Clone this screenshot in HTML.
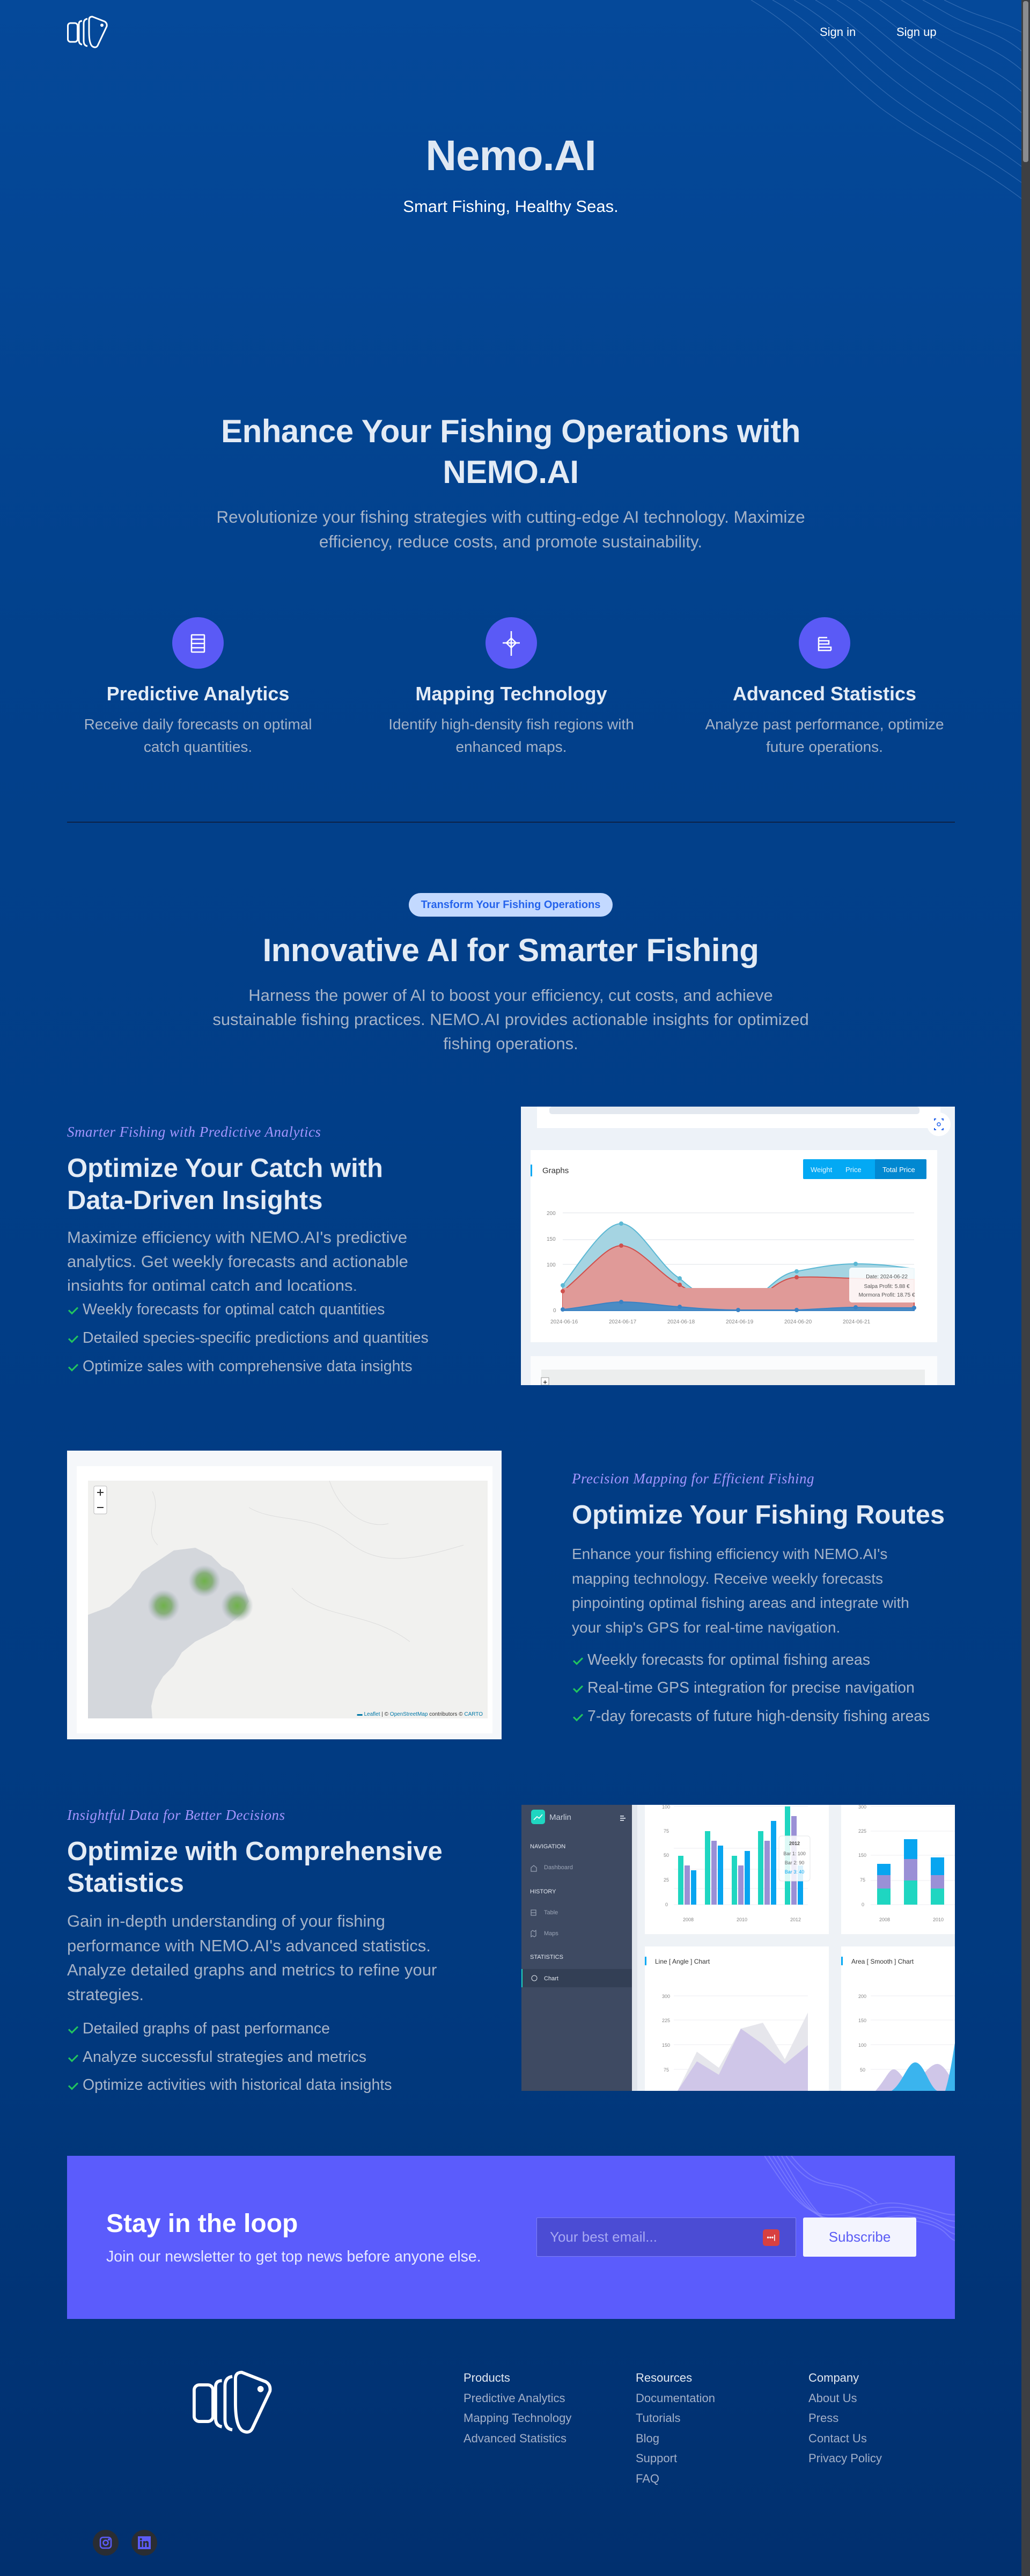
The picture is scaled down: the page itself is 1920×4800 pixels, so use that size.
<!DOCTYPE html>
<html><head><meta charset="utf-8">
<style>
*{margin:0;padding:0;box-sizing:border-box}
html,body{width:1920px;height:4800px;overflow:hidden}
body{position:relative;font-family:"Liberation Sans",Arial,sans-serif;background:linear-gradient(180deg,#05499a 0%,#02418c 25%,#013d86 50%,#013a80 75%,#01306f 100%);}
.a{position:absolute}
.c{text-align:center}
.h{color:#e3ebf5;font-weight:bold}
.p{color:#a5b3c8}
.hand{font-style:italic;color:#a596ff;font-size:27px;font-family:"Liberation Serif",serif;letter-spacing:.5px}
ul{list-style:none}
li{position:absolute;left:0;font-size:28.5px;color:#a9b6ca;white-space:nowrap;padding-left:29px}
li:before{content:"";position:absolute;left:3px;top:11px;width:14px;height:7px;border-left:3px solid #22c55e;border-bottom:3px solid #22c55e;transform:rotate(-45deg)}
.ic{position:absolute;width:96px;height:96px;border-radius:50%;background:#5a5af6;top:1150px}
.ft{font-size:36px;top:1272px;width:600px;margin-left:-300px}
.fd{font-size:28px;line-height:42px;top:1329px;width:600px;margin-left:-300px}
.fl a{display:block;color:#a3b0c9;font-size:22px;height:37.5px;text-decoration:none}
.fl b{display:block;color:#e2e8f0;font-size:22px;font-weight:normal;height:37.5px}
</style></head><body>

<div class="a" style="left:1904px;top:0;width:16px;height:4800px;background:#3d3f43"></div>
<div class="a" style="left:1907px;top:2px;width:10px;height:300px;background:#8a8c90;border-radius:4px"></div>

<svg class="a" style="left:1380px;top:0" width="524" height="380" viewBox="0 0 524 380">
<g fill="none" stroke="#7fa6dd" stroke-opacity=".35" stroke-width="1.3">
<path d="M20 0 C120 60 160 120 260 200 C340 260 430 300 524 370"/>
<path d="M60 0 C150 50 190 110 280 180 C360 240 440 280 524 340"/>
<path d="M100 0 C180 45 220 100 300 160 C380 220 450 255 524 310"/>
<path d="M140 0 C210 40 250 90 320 140 C400 200 460 230 524 280"/>
<path d="M180 0 C240 35 280 80 340 120 C410 170 470 200 524 245"/>
<path d="M220 0 C270 30 310 70 360 100 C420 140 480 170 524 210"/>
<path d="M260 0 C300 25 335 55 380 80 C430 110 485 135 524 170"/>
<path d="M300 0 C335 20 360 40 400 60 C445 80 490 100 524 130"/>
<path d="M340 0 C370 15 390 30 420 42 C460 58 495 70 524 95"/>
<path d="M380 0 C405 12 425 22 450 30 C480 40 505 48 524 60"/>
</g></svg>

<svg class="a" style="left:125px;top:28px" width="78" height="64" viewBox="0 0 78 64" fill="none" stroke="#fff" stroke-width="3" stroke-linejoin="round">
<rect x="1.5" y="15" width="18" height="35" rx="5"/>
<path d="M28 11 Q22 11 22 17 L22 47 Q22 54 28 55"/>
<path d="M38 7 Q31 8 31 16 L31 48 Q31 57 38 58"/>
<path d="M47 3 L70 12 Q75 15 74 21 L57 57 Q54 62 48 59 Q41 55 41 32 L41 9 Q41 3 47 3 Z"/>
<circle cx="65" cy="19" r="1.5" fill="#fff"/>
</svg>
<div class="a" style="left:1528px;top:47px;color:#fff;font-size:22px">Sign in</div>
<div class="a" style="left:1671px;top:47px;color:#fff;font-size:22px">Sign up</div>

<div class="a c h" style="left:0;width:1904px;top:244px;font-size:80px;letter-spacing:-1px;color:#dfe8f3">Nemo.AI</div>
<div class="a c" style="left:0;width:1904px;top:367px;font-size:31px;color:#fff">Smart Fishing, Healthy Seas.</div>

<div class="a c h" style="left:252px;width:1400px;top:766px;font-size:60px;line-height:76px;letter-spacing:-.5px">Enhance Your Fishing Operations with<br>NEMO.AI</div>
<div class="a c p" style="left:252px;width:1400px;top:940px;font-size:31.5px;line-height:46px">Revolutionize your fishing strategies with cutting-edge AI technology. Maximize<br>efficiency, reduce costs, and promote sustainability.</div>

<div class="ic" style="left:321px"><svg width="96" height="96" viewBox="0 0 96 96" fill="none" stroke="#fff" stroke-width="2.5"><rect x="36" y="33" width="24" height="32" rx="1"/><path d="M36 41H60M36 49H60M36 57H60"/></svg></div>
<div class="ic" style="left:905px"><svg width="96" height="96" viewBox="0 0 96 96" fill="none" stroke="#fff" stroke-width="2.5"><path d="M48 26V72M32 48H64"/><path d="M48 39L57 48L48 57L39 48Z"/></svg></div>
<div class="ic" style="left:1489px"><svg width="96" height="96" viewBox="0 0 96 96" fill="none" stroke="#fff" stroke-width="2.5"><path d="M37 38H53M37 38V62H60M37 44H56V50H37M37 56H60V62"/></svg></div>

<div class="a c h ft" style="left:369px">Predictive Analytics</div>
<div class="a c h ft" style="left:953px">Mapping Technology</div>
<div class="a c h ft" style="left:1537px">Advanced Statistics</div>
<div class="a c p fd" style="left:369px">Receive daily forecasts on optimal<br>catch quantities.</div>
<div class="a c p fd" style="left:953px">Identify high-density fish regions with<br>enhanced maps.</div>
<div class="a c p fd" style="left:1537px">Analyze past performance, optimize<br>future operations.</div>

<div class="a" style="left:125px;top:1531px;width:1655px;height:2px;background:#0d2247"></div>

<div class="a c" style="left:762px;top:1664px;width:380px;height:44px;border-radius:22px;background:#c3d9ff;color:#2563eb;font-size:20px;line-height:44px;font-weight:bold">Transform Your Fishing Operations</div>
<div class="a c h" style="left:0;width:1904px;top:1736px;font-size:60px;letter-spacing:-.5px">Innovative AI for Smarter Fishing</div>
<div class="a c p" style="left:252px;width:1400px;top:1832px;font-size:31px;line-height:45px">Harness the power of AI to boost your efficiency, cut costs, and achieve<br>sustainable fishing practices. NEMO.AI provides actionable insights for optimized<br>fishing operations.</div>

<div class="a hand" style="left:125px;top:2094px">Smarter Fishing with Predictive Analytics</div>
<div class="a h" style="left:125px;top:2147px;font-size:49px;line-height:60px">Optimize Your Catch with<br>Data-Driven Insights</div>
<div class="a p" style="left:125px;top:2283px;width:760px;height:122px;overflow:hidden;font-size:31px;line-height:45px;white-space:nowrap">Maximize efficiency with NEMO.AI's predictive<br>analytics. Get weekly forecasts and actionable<br>insights for optimal catch and locations.</div>
<ul class="a" style="left:125px;top:2424px;width:800px">
<li style="top:0">Weekly forecasts for optimal catch quantities</li>
<li style="top:53px">Detailed species-specific predictions and quantities</li>
<li style="top:106px">Optimize sales with comprehensive data insights</li>
</ul>

<svg class="a" style="left:971px;top:2062px" width="809" height="519" viewBox="0 0 809 519">
<rect width="809" height="519" fill="#edf2f8"/>
<rect x="30" y="0" width="752" height="40" fill="#fff"/>
<rect x="53" y="0" width="690" height="14" rx="5" fill="#e3e8ef"/>
<circle cx="779" cy="33" r="22" fill="#fff"/>
<path d="M771 26v-3h3M784 23h3v3M787 40v3h-3M774 43h-3v-3" stroke="#2563eb" stroke-width="2" fill="none"/><circle cx="779" cy="33" r="3" stroke="#2563eb" stroke-width="1.5" fill="none"/>
<rect x="18" y="81" width="758" height="358" fill="#fff"/>
<rect x="18" y="108" width="3" height="22" fill="#03a9f4"/>
<text x="40" y="124" font-size="15" fill="#333" font-family="Liberation Sans">Graphs</text>
<rect x="526" y="98" width="230" height="37" rx="2" fill="#03a9f4"/>
<rect x="660" y="98" width="96" height="37" rx="2" fill="#0288d1"/>
<text x="540" y="122" font-size="13" fill="#e6f6ff" font-family="Liberation Sans">Weight</text>
<text x="605" y="122" font-size="13" fill="#e6f6ff" font-family="Liberation Sans">Price</text>
<text x="674" y="122" font-size="13" fill="#fff" font-family="Liberation Sans">Total Price</text>
<g stroke="#e8ebef" stroke-width="1.5"><path d="M78 198H733M78 248H733M78 294H733"/></g>
<g font-size="10" fill="#888" font-family="Liberation Sans"><text x="48" y="202">200</text><text x="48" y="250">150</text><text x="48" y="298">100</text><text x="60" y="383">0</text>
<text x="55" y="404">2024-06-16</text><text x="164" y="404">2024-06-17</text><text x="273" y="404">2024-06-18</text><text x="382" y="404">2024-06-19</text><text x="491" y="404">2024-06-20</text><text x="600" y="404">2024-06-21</text></g>
<path d="M78 333 C130 260 160 218 187 218 C220 218 260 300 296 320 C340 360 380 373 405 373 C440 373 470 312 514 307 C560 298 590 293 624 293 C670 293 700 298 733 302 L733 380 L78 380Z" fill="#a5d4e2" stroke="#5bb8d4" stroke-width="2"/>
<path d="M78 344 C130 300 160 259 187 259 C220 259 260 315 296 332 C340 360 380 374 405 374 C440 374 470 320 514 318 C560 316 590 320 624 320 C670 322 700 322 733 322 L733 380 L78 380Z" fill="#e09a98" stroke="#d0504c" stroke-width="2"/>
<rect x="78" y="338" width="414" height="42" fill="#e09a98"/>
<path d="M78 378 C130 372 160 364 187 364 C230 364 260 371 296 373 C340 377 380 379 405 379 C460 379 490 379 514 379 C560 377 590 374 624 374 C680 375 700 375 733 375 L733 380 L78 380Z" fill="#4a8cc4" stroke="#3b82c4" stroke-width="2"/>
<g fill="#5bb8d4"><circle cx="78" cy="333" r="4"/><circle cx="187" cy="218" r="4"/><circle cx="296" cy="320" r="4"/><circle cx="514" cy="307" r="4"/><circle cx="624" cy="293" r="4"/></g>
<g fill="#d0504c"><circle cx="78" cy="344" r="4"/><circle cx="187" cy="259" r="4"/><circle cx="296" cy="332" r="4"/><circle cx="514" cy="318" r="4"/></g>
<g fill="#3b82c4"><circle cx="78" cy="378" r="4"/><circle cx="187" cy="364" r="4"/><circle cx="296" cy="373" r="4"/><circle cx="405" cy="379" r="4"/><circle cx="514" cy="379" r="4"/><circle cx="624" cy="374" r="4"/><circle cx="733" cy="375" r="4"/></g>
<rect x="612" y="300" width="141" height="65" rx="5" fill="#fff" fill-opacity=".88"/>
<g font-size="10" fill="#555" font-family="Liberation Sans" text-anchor="middle"><text x="682" y="320">Date: 2024-06-22</text><text x="682" y="338">Salpa Profit: 5.88 €</text><text x="682" y="354">Mormora Profit: 18.75 €</text></g>
<rect x="18" y="465" width="758" height="54" fill="#fbfcfd"/>
<rect x="38" y="490" width="715" height="29" fill="#eceeee"/>
<rect x="38" y="505" width="14" height="14" fill="#fff" stroke="#999"/><text x="41" y="518" font-size="14">+</text>
</svg>

<div class="a" style="left:125px;top:2703px;width:810px;height:538px;background:#f5f7fa"></div>
<div class="a" style="left:143px;top:2732px;width:775px;height:498px;background:#fff"></div>
<svg class="a" style="left:164px;top:2759px" width="745" height="443" viewBox="0 0 745 443">
<rect width="745" height="443" fill="#f1f1ef"/>
<path d="M0 250 L40 235 L80 200 L100 170 L130 150 L160 130 L200 125 L230 140 L250 160 L270 170 L290 195 L300 225 L285 250 L260 270 L230 285 L200 300 L175 320 L160 345 L140 365 L125 390 L118 420 L120 443 L0 443Z" fill="#d4d7dc"/>
<g stroke="#dcdcdc" fill="none" stroke-width="1"><path d="M300 50 C350 80 420 60 480 110 S600 150 700 120"/><path d="M380 200 C430 260 520 240 600 300"/><path d="M450 0 C470 60 520 90 560 80"/><path d="M120 20 C140 60 100 90 130 120"/></g>
<defs><radialGradient id="g"><stop offset="0" stop-color="#6fb24a"/><stop offset=".5" stop-color="#7aa86a" stop-opacity=".85"/><stop offset="1" stop-color="#9aa3b5" stop-opacity="0"/></radialGradient></defs>
<circle cx="217" cy="187" r="30" fill="url(#g)"/><circle cx="141" cy="233" r="30" fill="url(#g)"/><circle cx="278" cy="233" r="30" fill="url(#g)"/>
<rect x="11" y="10" width="24" height="52" rx="3" fill="#fff" stroke="#bbb"/><path d="M23 16v12M17 22h12M17 50h12" stroke="#333" stroke-width="2"/>
<text x="736" y="438" font-size="10" text-anchor="end" fill="#333" font-family="Liberation Sans"><tspan fill="#0078a8">▬ Leaflet</tspan> | © <tspan fill="#0078a8">OpenStreetMap</tspan> contributors © <tspan fill="#0078a8">CARTO</tspan></text>
</svg>

<div class="a hand" style="left:1066px;top:2740px">Precision Mapping for Efficient Fishing</div>
<div class="a h" style="left:1066px;top:2795px;font-size:49px">Optimize Your Fishing Routes</div>
<div class="a p" style="left:1066px;top:2873px;font-size:28px;line-height:45.5px;white-space:nowrap">Enhance your fishing efficiency with NEMO.AI's<br>mapping technology. Receive weekly forecasts<br>pinpointing optimal fishing areas and integrate with<br>your ship's GPS for real-time navigation.</div>
<ul class="a" style="left:1066px;top:3077px;width:800px">
<li style="top:0">Weekly forecasts for optimal fishing areas</li>
<li style="top:52px">Real-time GPS integration for precise navigation</li>
<li style="top:105px">7-day forecasts of future high-density fishing areas</li>
</ul>

<div class="a hand" style="left:125px;top:3367px">Insightful Data for Better Decisions</div>
<div class="a h" style="left:125px;top:3421px;font-size:49px;line-height:59px">Optimize with Comprehensive<br>Statistics</div>
<div class="a p" style="left:125px;top:3557px;font-size:31px;line-height:45.5px;white-space:nowrap">Gain in-depth understanding of your fishing<br>performance with NEMO.AI's advanced statistics.<br>Analyze detailed graphs and metrics to refine your<br>strategies.</div>
<ul class="a" style="left:125px;top:3764px;width:800px">
<li style="top:0">Detailed graphs of past performance</li>
<li style="top:53px">Analyze successful strategies and metrics</li>
<li style="top:105px">Optimize activities with historical data insights</li>
</ul>

<svg class="a" style="left:972px;top:3363px" width="808" height="533" viewBox="0 0 808 533" font-family="Liberation Sans">
<rect width="808" height="533" fill="#eef2f6"/>
<rect width="206" height="533" fill="#3e4a62"/>
<rect x="18" y="9" width="26" height="27" rx="5" fill="#1fd6c1"/><path d="M23 28l6-6 4 3 6-7" stroke="#fff" stroke-width="1.6" fill="none"/>
<text x="52" y="28" font-size="15" fill="#c8cfdb">Marlin</text>
<path d="M184 21h7M184 25h10M184 29h7" stroke="#c8cfdb" stroke-width="2"/>
<g fill="#e3e8f0" font-size="11"><text x="16" y="81">NAVIGATION</text><text x="16" y="165">HISTORY</text><text x="16" y="287">STATISTICS</text></g>
<g fill="#9aa4b6" font-size="11"><text x="42" y="120">Dashboard</text><text x="42" y="204">Table</text><text x="42" y="243">Maps</text></g>
<g stroke="#9aa4b6" fill="none" stroke-width="1.2"><path d="M18 124v-7l5-4 5 4v7z"/><rect x="18" y="196" width="9" height="10"/><path d="M18 201h9"/><path d="M18 236l3-2 3 2 3-2v10l-3 2-3-2-3 2z"/></g>
<rect x="0" y="306" width="206" height="34" fill="#333f55"/><rect x="0" y="306" width="2" height="34" fill="#1fd6c1"/>
<circle cx="24" cy="323" r="5" stroke="#e3e8f0" fill="none"/><text x="42" y="327" font-size="11" fill="#e3e8f0">Chart</text>
<rect x="206" y="0" width="10" height="533" fill="#e1e6ec"/>
<rect x="230" y="0" width="343" height="241" fill="#fff"/>
<rect x="596" y="0" width="212" height="241" fill="#fff"/>
<rect x="230" y="264" width="343" height="269" fill="#fff"/>
<rect x="596" y="264" width="212" height="269" fill="#fff"/>
<g stroke="#eceef1"><path d="M284 3H534M284 81H534M284 120H534M284 156H534M284 186H534"/><path d="M651 3H808M651 49H808M651 94H808M651 141H808M651 186H808"/><path d="M284 356H534M284 401H534M284 447H534M284 493H534"/><path d="M651 356H808M651 401H808M651 447H808M651 493H808"/></g>
<g fill="#888" font-size="9"><text x="262" y="7">100</text><text x="265" y="52">75</text><text x="265" y="97">50</text><text x="265" y="143">25</text><text x="268" y="189">0</text><text x="301" y="217">2008</text><text x="401" y="217">2010</text><text x="501" y="217">2012</text>
<text x="628" y="7">300</text><text x="628" y="52">225</text><text x="628" y="97">150</text><text x="631" y="143">75</text><text x="634" y="189">0</text><text x="667" y="217">2008</text><text x="767" y="217">2010</text>
<text x="262" y="360">300</text><text x="262" y="405">225</text><text x="262" y="451">150</text><text x="265" y="497">75</text>
<text x="628" y="360">200</text><text x="628" y="405">150</text><text x="628" y="451">100</text><text x="631" y="497">50</text></g>
<g fill="#1fd6c1"><rect x="292" y="95" width="10" height="91"/><rect x="342" y="49" width="10" height="137"/><rect x="392" y="95" width="10" height="91"/><rect x="441" y="49" width="10" height="137"/><rect x="491" y="3" width="10" height="183"/></g>
<g fill="#9a90d6"><rect x="304" y="113" width="10" height="73"/><rect x="354" y="67" width="10" height="119"/><rect x="404" y="113" width="10" height="73"/><rect x="453" y="67" width="10" height="119"/><rect x="503" y="21" width="10" height="165"/></g>
<g fill="#08a5f0"><rect x="316" y="122" width="10" height="64"/><rect x="366" y="76" width="10" height="110"/><rect x="416" y="86" width="10" height="100"/><rect x="465" y="30" width="10" height="156"/><rect x="515" y="113" width="10" height="73"/></g>
<rect x="480" y="58" width="58" height="84" rx="5" fill="#fff" fill-opacity=".85" stroke="#e4e7ea"/>
<g font-size="9" text-anchor="middle"><text x="509" y="75" font-weight="bold" fill="#444">2012</text><text x="509" y="94" fill="#666">Bar 1: 100</text><text x="509" y="111" fill="#666">Bar 2: 90</text><text x="509" y="128" fill="#08a5f0">Bar 3: 40</text></g>
<rect x="663" y="156" width="25" height="30" fill="#1fd6c1"/><rect x="663" y="131" width="25" height="25" fill="#9a90d6"/><rect x="663" y="110" width="25" height="21" fill="#08a5f0"/>
<rect x="713" y="141" width="25" height="45" fill="#1fd6c1"/><rect x="713" y="101" width="25" height="40" fill="#9a90d6"/><rect x="713" y="64" width="25" height="37" fill="#08a5f0"/>
<rect x="763" y="156" width="25" height="30" fill="#1fd6c1"/><rect x="763" y="131" width="25" height="25" fill="#9a90d6"/><rect x="763" y="98" width="25" height="33" fill="#08a5f0"/>
<rect x="230" y="283" width="3" height="16" fill="#03a9f4"/><text x="249" y="296" font-size="12" fill="#333">Line [ Angle ] Chart</text>
<rect x="596" y="283" width="3" height="16" fill="#03a9f4"/><text x="615" y="296" font-size="12" fill="#333">Area [ Smooth ] Chart</text>
<polygon points="291,533 327,460 368,490 409,417 450,406 491,474 534,387 534,533" fill="#e6e6ec"/>
<polygon points="291,533 327,478 368,503 409,417 450,446 491,483 534,448 534,533" fill="#cfc6e8"/>
<path d="M660 533 C680 510 685 493 694 493 C705 493 715 520 725 520 C740 520 760 480 777 483 C790 486 800 510 808 520 L808 533Z" fill="#cfc6e8"/>
<path d="M690 533 C710 520 720 480 734 480 C750 480 760 525 775 533Z" fill="#3ab4ee"/>
<path d="M790 533 C800 500 805 460 808 444 L808 533Z" fill="#3ab4ee"/>
</svg>

<div class="a" style="left:125px;top:4017px;width:1655px;height:304px;background:#5b5cfc;overflow:hidden">
<svg class="a" style="left:1300px;top:0" width="355" height="180" viewBox="0 0 355 180"><g fill="none" stroke="#8a8cff" stroke-opacity=".55" stroke-width="2">
<path d="M0 0 C40 60 70 110 120 110 C180 110 200 80 260 90 S330 110 355 110"/>
<path d="M8 0 C48 62 78 115 128 117 C188 117 208 88 266 98 S330 120 355 122"/>
<path d="M16 0 C56 64 86 120 136 124 C196 124 214 96 272 106 S332 130 355 134"/>
<path d="M24 0 C64 66 94 125 144 131 C204 131 220 104 278 114 S334 140 355 146"/>
<path d="M32 0 C72 68 102 130 152 138 C212 138 226 112 284 122 S336 150 355 158"/>
<path d="M40 0 C70 40 90 50 120 55 C160 60 180 75 200 90"/>
<path d="M50 0 C80 38 100 48 130 52 C170 58 190 72 210 88"/>
</g></svg>
</div>
<div class="a h" style="left:198px;top:4116px;font-size:48px;color:#fff">Stay in the loop</div>
<div class="a" style="left:198px;top:4189px;font-size:28.5px;color:#e6e8ff">Join our newsletter to get top news before anyone else.</div>
<div class="a" style="left:1000px;top:4132px;width:484px;height:73px;background:#4b4cd4;border:1px solid #7f80f5;border-radius:2px"></div>
<div class="a" style="left:1025px;top:4153px;font-size:26px;color:#a8a9f3">Your best email...</div>
<div class="a" style="left:1422px;top:4154px;width:31px;height:31px;border-radius:5px;background:#d84040;color:#fff;font-size:12px;line-height:31px;text-align:center;font-weight:bold">•••|</div>
<div class="a c" style="left:1497px;top:4132px;width:211px;height:73px;background:#f3f4fe;border-radius:3px;color:#5b5cf5;font-size:26px;line-height:73px">Subscribe</div>

<svg class="a" style="left:359px;top:4414px" width="152" height="126" viewBox="0 0 78 64" fill="none" stroke="#fff" stroke-width="3" stroke-linejoin="round">
<rect x="1.5" y="15" width="18" height="35" rx="5"/>
<path d="M28 11 Q22 11 22 17 L22 47 Q22 54 28 55"/>
<path d="M38 7 Q31 8 31 16 L31 48 Q31 57 38 58"/>
<path d="M47 3 L70 12 Q75 15 74 21 L57 57 Q54 62 48 59 Q41 55 41 32 L41 9 Q41 3 47 3 Z"/>
<circle cx="65" cy="19" r="1.5" fill="#fff"/>
</svg>
<div class="a fl" style="left:864px;top:4418px"><b>Products</b><a>Predictive Analytics</a><a>Mapping Technology</a><a>Advanced Statistics</a></div>
<div class="a fl" style="left:1185px;top:4418px"><b>Resources</b><a>Documentation</a><a>Tutorials</a><a>Blog</a><a>Support</a><a>FAQ</a></div>
<div class="a fl" style="left:1507px;top:4418px"><b>Company</b><a>About Us</a><a>Press</a><a>Contact Us</a><a>Privacy Policy</a></div>

<div class="a" style="left:173px;top:4714px;width:48px;height:48px;border-radius:50%;background:#2a2d33"></div>
<svg class="a" style="left:185px;top:4726px" width="24" height="24" viewBox="0 0 24 24" fill="none" stroke="#5b5bf5" stroke-width="2.6"><rect x="2" y="2" width="20" height="20" rx="5"/><circle cx="12" cy="12" r="4.5"/><circle cx="18" cy="6" r=".8" fill="#5b5bf5"/></svg>
<div class="a" style="left:245px;top:4714px;width:48px;height:48px;border-radius:50%;background:#2a2d33"></div>
<svg class="a" style="left:257px;top:4726px" width="24" height="24" viewBox="0 0 24 24"><rect width="24" height="24" fill="#5b5bf5"/><rect x="4" y="9" width="3.5" height="11" fill="#2a2d33"/><circle cx="5.7" cy="5.5" r="2" fill="#2a2d33"/><path d="M10 9h3.3v1.6c.8-1.3 2-1.9 3.4-1.9 2.6 0 3.3 1.8 3.3 4.2V20h-3.5v-6.3c0-1.3-.4-2-1.5-2s-1.7.8-1.7 2V20H10z" fill="#2a2d33"/></svg>

</body></html>
